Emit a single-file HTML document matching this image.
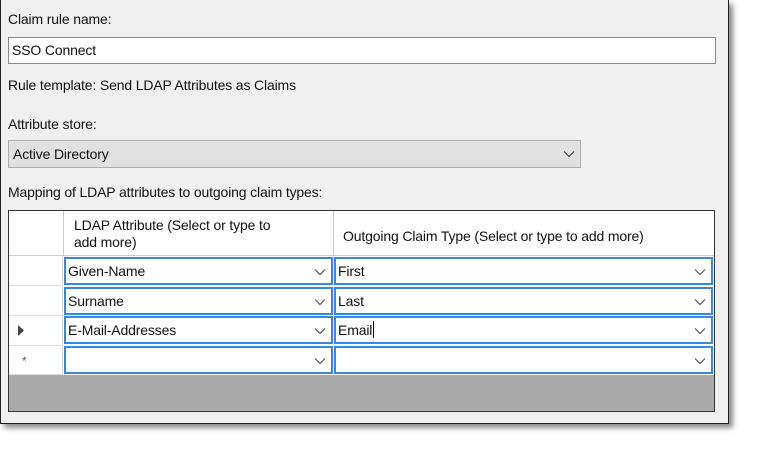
<!DOCTYPE html>
<html><head><style>
*{margin:0;padding:0;box-sizing:border-box}
body{width:761px;height:456px;background:#fff;position:relative;overflow:hidden;font-family:"Liberation Sans",sans-serif;font-size:14px;color:#111}
.a{position:absolute}
.panel{left:0;top:0;width:729px;height:424px;background:#f0f0f0;border:1px solid #222;border-top:none;box-shadow:4px 4px 5px rgba(0,0,0,.45)}
.t{position:absolute;white-space:nowrap;letter-spacing:-0.15px}
.cell{position:absolute;background:#fff;border:2px solid #3c86d6}
.chev{position:absolute;width:12px;height:8px}
.rh{position:absolute;left:9px;width:54px;background:#fff;border-bottom:1px solid #ddd;border-right:1px solid #ddd}
</style></head><body>
<div class="a panel"></div>
<div class="t" style="left:8px;top:11px">Claim rule name:</div>
<div class="a" style="left:8px;top:37px;width:708px;height:27px;background:#fff;border:1px solid #8a8a8a"></div>
<div class="t" style="left:12px;top:42px">SSO Connect</div>
<div class="t" style="left:8px;top:77px">Rule template: Send LDAP Attributes as Claims</div>
<div class="t" style="left:8px;top:116px">Attribute store:</div>
<div class="a" style="left:8px;top:140px;width:573px;height:28px;background:#e1e1e1;border:1px solid #adadad"></div>
<div class="t" style="left:13px;top:146px">Active Directory</div>
<svg class="chev" style="left:563px;top:150px" viewBox="0 0 12 8"><path d="M1 1.5L6 6.5L11 1.5" fill="none" stroke="#444" stroke-width="1.2"/></svg>
<div class="t" style="left:8px;top:184px">Mapping of LDAP attributes to outgoing claim types:</div>
<div class="a" style="left:8px;top:210px;width:707px;height:202px;background:#ababab;border:1px solid #333"></div>
<div class="a" style="left:9px;top:211px;width:705px;height:45px;background:#fff;border-bottom:1px solid #ccc"></div>
<div class="a" style="left:63px;top:211px;width:1px;height:45px;background:#ccc"></div>
<div class="a" style="left:333px;top:211px;width:1px;height:45px;background:#ccc"></div>
<div class="t" style="left:74px;top:217px;line-height:17px">LDAP Attribute (Select or type to<br>add more)</div>
<div class="t" style="left:343px;top:228px">Outgoing Claim Type (Select or type to add more)</div>
<div class="rh" style="top:256px;height:30px"></div>
<div class="rh" style="top:286px;height:30px"></div>
<div class="rh" style="top:316px;height:30px"></div>
<div class="rh" style="top:346px;height:29px"></div>
<div class="a" style="left:63px;top:256px;width:651px;height:119px;background:#fff"></div>
<svg class="a" style="left:18px;top:325px" width="7" height="11"><path d="M0 0L6 5.5L0 11Z" fill="#444"/></svg>
<div class="t" style="left:22px;top:354px;font-size:12px;color:#555">*</div>
<div class="cell" style="left:64px;top:257px;width:269px;height:28px"></div>
<div class="cell" style="left:334px;top:257px;width:379px;height:28px"></div>
<div class="cell" style="left:64px;top:287px;width:269px;height:28px"></div>
<div class="cell" style="left:334px;top:287px;width:379px;height:28px"></div>
<div class="cell" style="left:64px;top:316px;width:269px;height:28px"></div>
<div class="cell" style="left:334px;top:316px;width:379px;height:28px"></div>
<div class="cell" style="left:64px;top:346px;width:269px;height:28px"></div>
<div class="cell" style="left:334px;top:346px;width:379px;height:28px"></div>
<div class="t" style="left:68px;top:263px">Given-Name</div>
<div class="t" style="left:338px;top:263px">First</div>
<div class="t" style="left:68px;top:293px">Surname</div>
<div class="t" style="left:338px;top:293px">Last</div>
<div class="t" style="left:68px;top:322px">E-Mail-Addresses</div>
<div class="t" style="left:338px;top:322px">Email</div>
<div class="a" style="left:373px;top:321px;width:1px;height:17px;background:#000"></div>
<svg class="chev" style="left:314px;top:268px" viewBox="0 0 12 8"><path d="M1 1.5L6 6.5L11 1.5" fill="none" stroke="#555" stroke-width="1.2"/></svg>
<svg class="chev" style="left:314px;top:298px" viewBox="0 0 12 8"><path d="M1 1.5L6 6.5L11 1.5" fill="none" stroke="#555" stroke-width="1.2"/></svg>
<svg class="chev" style="left:314px;top:327px" viewBox="0 0 12 8"><path d="M1 1.5L6 6.5L11 1.5" fill="none" stroke="#555" stroke-width="1.2"/></svg>
<svg class="chev" style="left:314px;top:357px" viewBox="0 0 12 8"><path d="M1 1.5L6 6.5L11 1.5" fill="none" stroke="#555" stroke-width="1.2"/></svg>
<svg class="chev" style="left:694px;top:268px" viewBox="0 0 12 8"><path d="M1 1.5L6 6.5L11 1.5" fill="none" stroke="#555" stroke-width="1.2"/></svg>
<svg class="chev" style="left:694px;top:298px" viewBox="0 0 12 8"><path d="M1 1.5L6 6.5L11 1.5" fill="none" stroke="#555" stroke-width="1.2"/></svg>
<svg class="chev" style="left:694px;top:327px" viewBox="0 0 12 8"><path d="M1 1.5L6 6.5L11 1.5" fill="none" stroke="#555" stroke-width="1.2"/></svg>
<svg class="chev" style="left:694px;top:357px" viewBox="0 0 12 8"><path d="M1 1.5L6 6.5L11 1.5" fill="none" stroke="#555" stroke-width="1.2"/></svg>
</body></html>
